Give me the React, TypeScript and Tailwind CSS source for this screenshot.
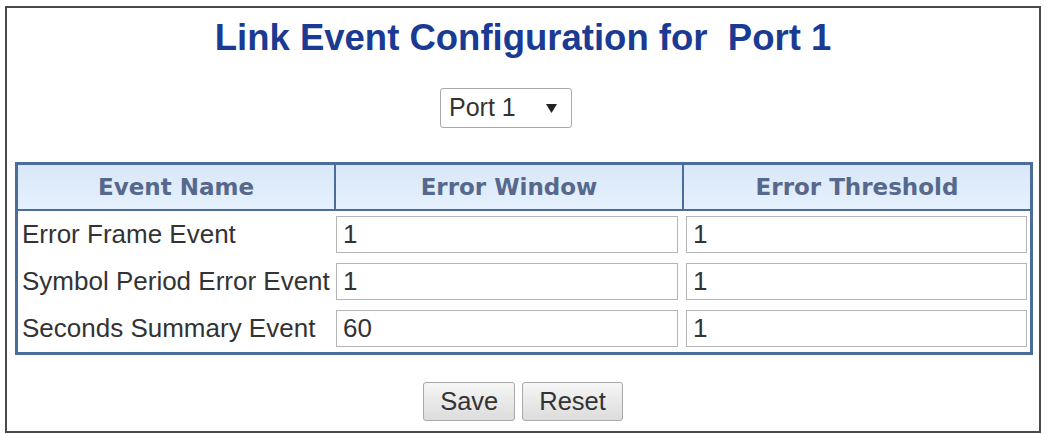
import React from "react";

interface LinkEvent {
  name: string;
  window: string;
  threshold: string;
}

const events: LinkEvent[] = [
  { name: "Error Frame Event", window: "1", threshold: "1" },
  { name: "Symbol Period Error Event", window: "1", threshold: "1" },
  { name: "Seconds Summary Event", window: "60", threshold: "1" },
];

const arial = { fontFamily: '"Liberation Sans", Arial, sans-serif' };

const FieldInput = ({ value }: { value: string }) => (
  <input
    defaultValue={value}
    className="h-[37px] w-full border-[1.5px] border-[#b5b5b5] bg-white pl-[6px] text-[26px] text-[#333] outline-none"
    style={arial}
  />
);

const Button = ({ label }: { label: string }) => (
  <button
    className="h-[39px] rounded-[3px] border border-[#a9a9a9] bg-gradient-to-b from-[#f6f6f6] to-[#dcdcdc] px-4 text-[25.5px] leading-none text-[#333]"
    style={arial}
  >
    {label}
  </button>
);

export default function App() {
  return (
    <div className="min-h-[434px] bg-white pt-[6px]">
      <div className="ml-[5px] flex h-[427px] w-[1036px] flex-col border-2 border-[#4a4a4a] pt-[10px]">
        {/* page heading */}
        <h1
          className="h-[40px] text-center text-[36.5px] font-bold leading-[40px] text-[#1b3a93]"
          style={arial}
        >
          Link Event Configuration for{"\u00a0"} Port 1
        </h1>

        {/* port picker */}
        <div className="mt-[30px] flex justify-center">
          <div
            className="mr-[34px] flex h-[40px] w-[132px] items-center justify-between rounded-[3px] border border-[#a9a9a9] bg-white pl-[8px] pr-[14px] text-[25px] text-[#333]"
            style={arial}
          >
            <span>Port 1</span>
            <svg width="11" height="9" viewBox="0 0 11 9">
              <path d="M0 0 H11 L5.5 9 Z" fill="#222" />
            </svg>
          </div>
        </div>

        {/* event table */}
        <div className="ml-[8px] mt-[34px] w-[1018px] border-[3px] border-[#4a6d99]">
          <div
            className="grid h-[46px] grid-cols-[316px_2px_346px_2px_346px] border-b-2 border-[#4a6d99] bg-gradient-to-b from-[#d9e7f8] to-[#e6f1fd] text-[23px] font-bold text-[#56688c]"
            style={{ fontFamily: '"DejaVu Sans", Verdana, sans-serif' }}
          >
            <div className="flex items-center justify-center">Event Name</div>
            <div className="bg-[#4a6d99]" />
            <div className="flex items-center justify-center">Error Window</div>
            <div className="bg-[#4a6d99]" />
            <div className="flex items-center justify-center">Error Threshold</div>
          </div>
          {events.map((ev) => (
            <div
              key={ev.name}
              className="grid h-[47px] grid-cols-[318px_348px_346px] items-center"
            >
              <div className="pl-[4px] text-[26px] text-[#333] whitespace-nowrap" style={arial}>
                {ev.name}
              </div>
              <div className="pr-[6px]">
                <FieldInput value={ev.window} />
              </div>
              <div className="pl-[2px] pr-[3px]">
                <FieldInput value={ev.threshold} />
              </div>
            </div>
          ))}
        </div>

        {/* actions */}
        <div className="mt-[27px] flex justify-center gap-[7px]">
          <Button label="Save" />
          <Button label="Reset" />
        </div>
      </div>
    </div>
  );
}
